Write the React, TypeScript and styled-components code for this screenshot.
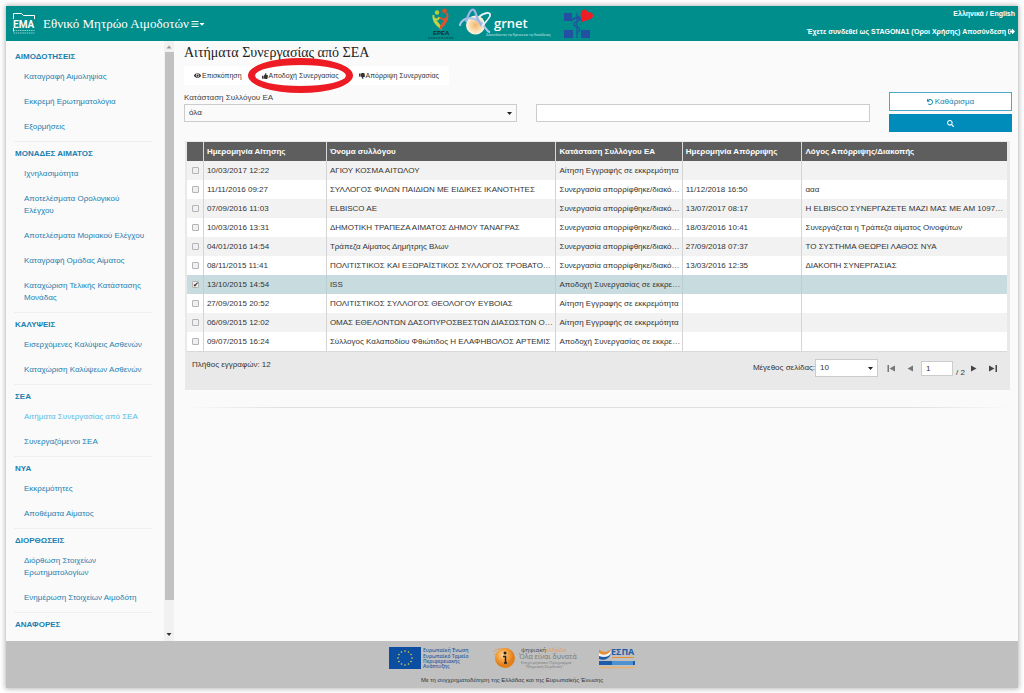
import React, { useState } from "react";
import styled, { createGlobalStyle } from "styled-components";
import {
  FaBars,
  FaCaretDown,
  FaEye,
  FaSearch,
  FaSignOutAlt,
  FaThumbsDown,
  FaThumbsUp,
  FaUndo,
} from "react-icons/fa";

const sans = `"Liberation Sans", Arial, sans-serif`;
const serif = `"Liberation Serif", "Times New Roman", serif`;

const GlobalStyle = createGlobalStyle`
  *, *::before, *::after { box-sizing: border-box; }
  body {
    margin: 0;
    background: #fff;
    color: #333;
    font-family: ${sans};
    font-size: 8px;
    line-height: 12px;
  }
  button, input, select { font: inherit; color: inherit; margin: 0; }
  a { color: inherit; text-decoration: none; }
`;

const Page = styled.div`
  min-height: 100vh;
  padding: 6px 6px 5px;
  display: flex;
`;

const Frame = styled.div`
  flex: 1;
  min-width: 0;
  display: flex;
  flex-direction: column;
  background: #fafafa;
  box-shadow: 0 0 5px 1px rgba(0, 0, 0, 0.28);
`;

const Header = styled.header`
  display: grid;
  grid-template-columns: 1fr auto 1fr;
  height: 35px;
  padding-right: 3px;
  background: #008e8c;
  color: #fff;
`;

const Brand = styled.div`
  display: flex;
  align-items: center;
  gap: 6px;
  padding-left: 6px;
`;

const BrandName = styled.span`
  font-family: ${serif};
  font-size: 13px;
  line-height: 16px;
  white-space: nowrap;
`;

const MenuToggle = styled.button`
  display: flex;
  align-items: center;
  padding: 0;
  border: 0;
  background: none;
  margin-left: -4px;
  svg + svg { width: 6px; }
`;

const Partners = styled.div`
  display: flex;
  align-items: center;
  gap: 4px;
`;

const Account = styled.div`
  display: flex;
  flex-direction: column;
  align-items: flex-end;
  gap: 6px;
  padding-top: 2px;
  font-size: 7px;
  font-weight: bold;
  white-space: nowrap;
  svg { vertical-align: -1px; }
`;

const Body = styled.div`
  flex: 1;
  display: flex;
  min-height: 0;
`;

const Sidebar = styled.div`
  display: flex;
  width: 168px;
  flex: none;
`;

const Nav = styled.nav`
  flex: 1;
  padding: 7px 12px 0 8px;
  color: #1b7fb0;
`;

const NavGroup = styled.section`
  & + & {
    margin-top: 1px;
    border-top: 1px solid #efefef;
    padding-top: 3px;
  }
`;

const NavHeading = styled.h2`
  margin: 0;
  padding: 3px 1px 2px;
  font-size: 8px;
  line-height: 12px;
`;

const NavList = styled.ul`
  margin: 0;
  padding: 0;
  list-style: none;
`;

const NavLink = styled.a<{ $active?: boolean }>`
  display: block;
  padding: 6px 4px 7px 10px;
  color: ${(p) => (p.$active ? "#5bbbe6" : "inherit")};
`;

const ScrollTrack = styled.div`
  display: flex;
  flex-direction: column;
  align-items: center;
  width: 10px;
  background: #f1f1f1;
`;

const ScrollArrow = styled.svg`
  width: 10px;
  height: 11px;
  flex: none;
`;

const ScrollThumb = styled.div`
  flex: 55;
  width: 9px;
  background: #c1c1c1;
`;

const ScrollRest = styled.div`
  flex: 3;
`;

const Main = styled.main`
  flex: 1;
  min-width: 0;
  padding: 4px 6px 0 10px;
`;

const Title = styled.h1`
  margin: 0 0 5px;
  font-family: ${serif};
  font-size: 14px;
  line-height: 16px;
  font-weight: normal;
  color: #222;
`;

const Toolbar = styled.div`
  display: inline-flex;
  height: 19px;
  padding: 0 10px;
  gap: 20px;
  background: #fff;
  vertical-align: top;
`;

const ToolButton = styled.button`
  position: relative;
  display: flex;
  align-items: center;
  gap: 1px;
  padding: 0;
  border: 0;
  background: none;
  font-size: 7px;
  white-space: nowrap;
`;

const HighlightRing = styled.span`
  position: absolute;
  inset: -8px -14px;
  border: 7px solid #ed1c24;
  border-radius: 50%;
  pointer-events: none;
`;

const Filters = styled.form`
  display: grid;
  grid-template-columns: 333fr 333fr 123fr;
  column-gap: 19px;
  align-items: end;
  margin-top: 7px;
`;

const Field = styled.div`
  display: flex;
  flex-direction: column;
  padding-bottom: 10px;
`;

const FieldLabel = styled.label`
  line-height: 12px;
  color: #444;
`;

const SelectWrap = styled.div<{ $width?: string; $bg: string }>`
  display: grid;
  align-items: center;
  width: ${(p) => p.$width ?? "100%"};
  height: 18px;
  border: 1px solid #ccc;
  background: ${(p) => p.$bg};
  & > * { grid-area: 1 / 1; }
  & > svg { justify-self: end; margin-right: 4px; pointer-events: none; }
`;

const Select = styled.select`
  appearance: none;
  width: 100%;
  height: 16px;
  padding: 0 4px;
  border: 0;
  background: transparent;
`;

const TextInput = styled.input`
  width: 100%;
  height: 18px;
  padding: 0 4px;
  border: 1px solid #ccc;
  background: #fff;
`;

const Actions = styled.div`
  display: flex;
  flex-direction: column;
  gap: 3px;
`;

const ActionButton = styled.button<{ $solid?: boolean }>`
  display: flex;
  align-items: center;
  justify-content: center;
  gap: 2px;
  height: ${(p) => (p.$solid ? 18 : 19)}px;
  padding: 0;
  border: 1px solid ${(p) => (p.$solid ? "#008cba" : "#4ba8c8")};
  background: ${(p) => (p.$solid ? "#008cba" : "#fff")};
  color: ${(p) => (p.$solid ? "#fff" : "#1583b0")};
`;

const GridPanel = styled.section`
  margin: 9px 2px 0 1px;
  padding: 1px 3px 0 2px;
  background: #e9e9e9;
`;

const Table = styled.table`
  width: 100%;
  table-layout: fixed;
  border-collapse: collapse;
`;

const HeadCell = styled.th`
  height: 19px;
  padding: 0 0 0 3px;
  background: #5e5e5e;
  color: #fff;
  text-align: left;
  white-space: nowrap;
  & + & { border-left: 1px solid #d8d8d8; }
`;

const Row = styled.tr<{ $selected: boolean }>`
  background: ${(p) => (p.$selected ? "#c8dce0" : "#fff")};
  &:nth-child(odd) { background: ${(p) => (p.$selected ? "#c8dce0" : "#f2f2f2")}; }
  td + td { border-left: 1px solid ${(p) => (p.$selected ? "#bccfd3" : "#d4d4d4")}; }
`;

const Cell = styled.td`
  height: 19px;
  padding: 0 0 0 3px;
  overflow: hidden;
  text-overflow: ellipsis;
  white-space: nowrap;
`;

const CheckCell = styled.td`
  padding: 1px 0 0 1px;
  text-align: center;
  line-height: 8px;
`;

const CheckBox = styled.input`
  appearance: none;
  display: inline-grid;
  place-items: center;
  width: 7px;
  height: 7px;
  border: 1px solid #b4b4b4;
  border-radius: 1px;
  background: #f0f0f0;
  vertical-align: top;
  &:checked::before {
    content: "✔";
    font: 7px/7px "DejaVu Sans", sans-serif;
    color: #222;
  }
`;

const Pager = styled.div`
  display: flex;
  justify-content: space-between;
  height: 39px;
  padding: 7px 6px 0 5px;
  border-top: 1px solid #d9d9d9;
`;

const PagerControls = styled.div`
  display: flex;
  height: 18px;
  align-items: center;
`;

const PagerSelect = styled(SelectWrap)`
  margin-right: 4px;
`;

const PageNumber = styled.input`
  width: 32px;
  height: 15px;
  margin-left: 3px;
  padding: 0 4px;
  border: 1px solid #ccc;
  background: #fff;
`;

const PageTotal = styled.span`
  align-self: flex-end;
  line-height: 9px;
  margin-left: 3px;
`;

const PagerButton = styled.button`
  display: grid;
  place-items: center;
  width: 18px;
  height: 14px;
  padding: 0;
  border: 0;
  background: none;
  color: #444;
  &:disabled { color: #777; }
`;

const Divider = styled.hr`
  height: 1px;
  margin: 17px 0 0;
  border: 0;
  background: linear-gradient(to right, transparent, #e0e0e0 12%, #e0e0e0 88%, transparent);
`;

const Footer = styled.footer`
  display: flex;
  flex-direction: column;
  align-items: center;
  height: 47px;
  padding-top: 4px;
  background: #c0c0c0;
  color: #333;
`;

const Logos = styled.div`
  display: flex;
  align-items: center;
  gap: 20px;
  height: 26px;
`;

const Caption = styled.p`
  margin: 3px 0 0;
  font-size: 6px;
  line-height: 12px;
`;

const navGroups = [
  { title: "ΑΙΜΟΔΟΤΗΣΕΙΣ", items: ["Καταγραφή Αιμοληψίας", "Εκκρεμή Ερωτηματολόγια", "Εξορμήσεις"] },
  {
    title: "ΜΟΝΑΔΕΣ ΑΙΜΑΤΟΣ",
    items: [
      "Ιχνηλασιμότητα",
      "Αποτελέσματα Ορολογικού Ελέγχου",
      "Αποτελέσματα Μοριακού Ελέγχου",
      "Καταγραφή Ομάδας Αίματος",
      "Καταχώριση Τελικής Κατάστασης Μονάδας",
    ],
  },
  { title: "ΚΑΛΥΨΕΙΣ", items: ["Εισερχόμενες Καλύψεις Ασθενών", "Καταχώριση Καλύψεων Ασθενών"] },
  { title: "ΣΕΑ", items: ["Αιτήματα Συνεργασίας από ΣΕΑ", "Συνεργαζόμενοι ΣΕΑ"] },
  { title: "ΝΥΑ", items: ["Εκκρεμότητες", "Αποθέματα Αίματος"] },
  { title: "ΔΙΟΡΘΩΣΕΙΣ", items: ["Διόρθωση Στοιχείων Ερωτηματολογίων", "Ενημέρωση Στοιχείων Αιμοδότη"] },
  { title: "ΑΝΑΦΟΡΕΣ", items: [] },
];

const activeItem = "Αιτήματα Συνεργασίας από ΣΕΑ";

const columns = [
  { title: "Ημερομηνία Αίτησης", width: "15%" },
  { title: "Όνομα συλλόγου", width: "28%" },
  { title: "Κατάσταση Συλλόγου ΕΑ", width: "15.4%" },
  { title: "Ημερομηνία Απόρριψης", width: "14.6%" },
  { title: "Λόγος Απόρριψης/Διακοπής", width: "25%" },
];

const pending = "Αίτηση Εγγραφής σε εκκρεμότητα";
const rejected = "Συνεργασία απορρίφθηκε/διακόπηκε";
const accepting = "Αποδοχή Συνεργασίας σε εκκρεμότητα";

const rows: string[][] = [
  ["10/03/2017 12:22", "ΑΓΙΟΥ ΚΟΣΜΑ ΑΙΤΩΛΟΥ", pending, "", ""],
  ["11/11/2016 09:27", "ΣΥΛΛΟΓΟΣ ΦΙΛΩΝ ΠΑΙΔΙΩΝ ΜΕ ΕΙΔΙΚΕΣ ΙΚΑΝΟΤΗΤΕΣ", rejected, "11/12/2018 16:50", "ααα"],
  ["07/09/2016 11:03", "ELBISCO AE", rejected, "13/07/2017 08:17", "Η ELBISCO ΣΥΝΕΡΓΑΖΕΤΕ ΜΑΖΙ ΜΑΣ ΜΕ ΑΜ 10975...."],
  ["10/03/2016 13:31", "ΔΗΜΟΤΙΚΗ ΤΡΑΠΕΖΑ ΑΙΜΑΤΟΣ ΔΗΜΟΥ ΤΑΝΑΓΡΑΣ", rejected, "18/03/2016 10:41", "Συνεργάζεται η Τράπεζα αίματος Οινοφύτων"],
  ["04/01/2016 14:54", "Τράπεζα Αίματος Δημήτρης Βλων", rejected, "27/09/2018 07:37", "ΤΟ ΣΥΣΤΗΜΑ ΘΕΩΡΕΙ ΛΑΘΟΣ ΝΥΑ"],
  ["08/11/2015 11:41", "ΠΟΛΙΤΙΣΤΙΚΟΣ ΚΑΙ ΕΞΩΡΑΪΣΤΙΚΟΣ ΣΥΛΛΟΓΟΣ ΤΡΟΒΑΤΟΥ ΤΡΙΚΑΛΩΝ", rejected, "13/03/2016 12:35", "ΔΙΑΚΟΠΗ ΣΥΝΕΡΓΑΣΙΑΣ"],
  ["13/10/2015 14:54", "ISS", accepting, "", ""],
  ["27/09/2015 20:52", "ΠΟΛΙΤΙΣΤΙΚΟΣ ΣΥΛΛΟΓΟΣ ΘΕΟΛΟΓΟΥ ΕΥΒΟΙΑΣ", pending, "", ""],
  ["06/09/2015 12:02", "ΟΜΑΣ ΕΘΕΛΟΝΤΩΝ ΔΑΣΟΠΥΡΟΣΒΕΣΤΩΝ ΔΙΑΣΩΣΤΩΝ ΟΚΤΩΝΙΑΣ", pending, "", ""],
  ["09/07/2015 16:24", "Σύλλογος Καλαποδίου Φθιώτιδος Η ΕΛΑΦΗΒΟΛΟΣ ΑΡΤΕΜΙΣ", accepting, "", ""],
];

const EmaLogo = () => (
  <svg width="25" height="25" viewBox="0 0 25 25" aria-hidden="true">
    <path d="M1.5 8V2.5h8l2 2h11V8M1.5 17v3.5" fill="none" stroke="#fff" strokeWidth="1" />
    <path d="M22.5 4.500V8" stroke="#fff" strokeWidth="1" />
    <text x="1" y="17" fontFamily="Roboto, sans-serif" fontWeight="bold" fontSize="10" fill="#fff">ΕΜΑ</text>
    <path d="M1.500 19.500h21M1.500 22h21" stroke="#8fd0cf" strokeWidth="1" strokeDasharray="1.500 0.700" />
  </svg>
);

const EpsaLogo = () => (
  <svg width="28" height="33" viewBox="0 0 28 33" aria-hidden="true">
    <circle cx="10" cy="5.500" r="2.200" fill="#b5cc3c" />
    <circle cx="17.500" cy="4" r="2.400" fill="#d8502c" />
    <path d="M6.500 8c-1 5 2 9 7 13 0-4-5-5-5.500-9 2 1 3.500 1 4-2" fill="none" stroke="#c3d245" strokeWidth="2" />
    <path d="M20 6c2 5-1 10-6.500 15 0-3 4.500-5 4.500-9-2 1-4 0-4.500-2" fill="none" stroke="#dd5330" strokeWidth="2" />
    <text x="6" y="28" fontFamily="Liberation Sans" fontWeight="bold" fontSize="6" fill="#12302f">ΕΡΕΑ</text>
    <path d="M1 31h26" stroke="#0b4a49" strokeWidth="1.200" strokeDasharray="2 0.600" />
  </svg>
);

const GrnetLogo = () => (
  <svg width="100" height="33" viewBox="0 0 100 33" aria-hidden="true">
    <defs>
      <radialGradient id="globe">
        <stop offset="0" stopColor="#f3b46c" />
        <stop offset="0.600" stopColor="#f8dcae" />
        <stop offset="1" stopColor="#fdf7e6" />
      </radialGradient>
    </defs>
    <circle cx="16.500" cy="18" r="9.500" fill="url(#globe)" />
    <path d="M.500 19C3 11 11 9 19 13.500s7 10 12 12" fill="none" stroke="#a9c5ea" strokeWidth="2.200" />
    <path d="M7 15C10 4 13 1.500 15 3s3 11 8 16" fill="none" stroke="#9db4e4" strokeWidth="2.200" />
    <path d="M20 10c4-4 10-5 11-3s-3 7-8 12" fill="none" stroke="#e6f3fa" strokeWidth="1.800" />
    <text x="35" y="21" fontFamily="Open Sans, sans-serif" fontWeight="600" fontSize="13" fill="#fff">grnet</text>
    <text x="27" y="29" fontFamily="Roboto, sans-serif" fontSize="3" fill="#c8e6e5">Διασυνδέοντας την Έρευνα και την Εκπαίδευση</text>
  </svg>
);

const HealthLogo = () => (
  <svg width="32" height="31" viewBox="0 0 32 31" aria-hidden="true">
    <path d="M1 5h8v8H1zM1 22h9v8H1zM18 22h9v8h-9z" fill="#2450a4" />
    <path d="M14 5v25" stroke="#2450a4" strokeWidth="1.200" />
    <path d="M14 8c4 1 4 4 0 5.500s-4 4 0 5.500 3 4 0 6M9 13c1-4 8-4 10 0" fill="none" stroke="#2450a4" strokeWidth="1.300" />
    <path d="M18.500 3c2-2.500 5.500-2 6 1.500 3-1 6 .500 5.500 3.500-.500 3.500-6 4-11 6C18.500 10 16.500 6 18.500 3z" fill="#ee1c25" />
  </svg>
);

const EuLogo = () => (
  <svg width="84" height="24" viewBox="0 0 84 24" aria-hidden="true">
    <rect x="0" y="1" width="32" height="22" fill="#0b4ea2" />
    {Array.from({ length: 12 }, (_, i) => {
      const a = (i * Math.PI) / 6;
      return <circle key={i} cx={16 + 7 * Math.cos(a)} cy={12 + 7 * Math.sin(a)} r="0.800" fill="#e8d93c" />;
    })}
    <g fontFamily="Open Sans, sans-serif" fontSize="5" fill="#2b5ba0" fontWeight="600">
      <text x="34" y="6">Ευρωπαϊκή Ένωση</text>
      <text x="34" y="12">Ευρωπαϊκό Ταμείο</text>
      <text x="34" y="17">Περιφερειακής</text>
      <text x="34" y="22">Ανάπτυξης</text>
    </g>
  </svg>
);

const DigitalLogo = () => (
  <svg width="86" height="24" viewBox="0 0 86 24" aria-hidden="true">
    <defs>
      <radialGradient id="ball" cx="0.400" cy="0.350">
        <stop offset="0" stopColor="#ffd9a0" />
        <stop offset="0.550" stopColor="#f7a23d" />
        <stop offset="1" stopColor="#e07f1c" />
      </radialGradient>
    </defs>
    <path d="M0 6c6-5 13-4 18 0M1 9c4-3 8-4 12-3" stroke="#d9a262" fill="none" />
    <circle cx="12" cy="12" r="10" fill="url(#ball)" />
    <circle cx="12" cy="7" r="1.500" fill="#222" />
    <path d="M10 10.500h2.500V16l1 1M11 17h3" stroke="#222" strokeWidth="1.500" fill="none" />
    <g fontFamily="Open Sans, sans-serif">
      <text x="28" y="6" fontSize="6" fill="#444">ψηφιακή<tspan fill="#e79a4a">ελλάδα</tspan></text>
      <text x="26" y="13" fontSize="7" fill="#777">Όλα είναι δυνατά</text>
      <text x="28" y="18" fontSize="4" fill="#777">Επιχειρησιακό Πρόγραμμα</text>
      <text x="32" y="22" fontSize="4" fill="#777">"Ψηφιακή Σύγκλιση"</text>
    </g>
  </svg>
);

const EspaLogo = () => (
  <svg width="36" height="24" viewBox="0 0 36 24" aria-hidden="true">
    <path d="M0 3c3 4 8 4 12 0-2 6-8 7-12 5z" fill="#e88f33" />
    <path d="M0 7c5 3 8 2 12-2-1 7-8 9-12 6z" fill="#f4f4f4" />
    <path d="M0 10c5 2 9 1 12-2-2 5-7 7-12 5z" fill="#1c5ca8" />
    <text x="12" y="9" fontFamily="Open Sans, sans-serif" fontWeight="bold" fontSize="9" fill="#1c5ca8">ΕΣΠΑ</text>
    <path d="M13 11.500h22" stroke="#e88f33" />
    <rect x="0" y="15" width="36" height="4" fill="#1c5ca8" />
    <rect x="13" y="15" width="21" height="4" fill="#4d91cf" />
    <path d="M0 21.500h36" stroke="#e8b06e" strokeWidth="1.500" />
  </svg>
);

const Chevron = () => (
  <svg width="5" height="3" viewBox="0 0 5 3" aria-hidden="true">
    <path d="M0 0h5L2.500 3z" fill="#222" />
  </svg>
);

const PageIcon = ({ back, edge }: { back?: boolean; edge?: boolean }) => (
  <svg width="9" height="7" viewBox="0 0 9 7" fill="currentColor" aria-hidden="true">
    {back ? <path d="M8 .500v6L2.500 3.500z" /> : <path d="M1 .500v6l5.500-3z" />}
    {edge && <rect x={back ? 0.5 : 7.5} y="0" width="1.500" height="7" />}
  </svg>
);

export default function App() {
  const [selected, setSelected] = useState<number[]>([6]);
  const toggle = (i: number) =>
    setSelected((s) => (s.includes(i) ? s.filter((n) => n !== i) : [...s, i]));

  return (
    <>
      <GlobalStyle />
      <Page>
        <Frame>
          <Header>
            <Brand>
              <EmaLogo />
              <BrandName>Εθνικό Μητρώο Αιμοδοτών</BrandName>
              <MenuToggle type="button" aria-label="Μενού">
                <FaBars size={8} />
                <FaCaretDown size={8} />
              </MenuToggle>
            </Brand>
            <Partners>
              <EpsaLogo />
              <GrnetLogo />
              <HealthLogo />
            </Partners>
            <Account>
              <span>
                <a href="#el">Ελληνικά</a> / <a href="#en">English</a>
              </span>
              <span>
                Έχετε συνδεθεί ως STAGONA1 (<a href="#terms">Όροι Χρήσης</a>){" "}
                <a href="#logout">
                  Αποσύνδεση <FaSignOutAlt size={7} />
                </a>
              </span>
            </Account>
          </Header>

          <Body>
            <Sidebar>
              <Nav>
                {navGroups.map((g) => (
                  <NavGroup key={g.title}>
                    <NavHeading>{g.title}</NavHeading>
                    <NavList>
                      {g.items.map((item) => (
                        <li key={item}>
                          <NavLink href="#nav" $active={item === activeItem}>
                            {item}
                          </NavLink>
                        </li>
                      ))}
                    </NavList>
                  </NavGroup>
                ))}
              </Nav>
              <ScrollTrack aria-hidden="true">
                <ScrollArrow viewBox="0 0 10 11">
                  <path d="M2.500 7.500h5L5 4.500z" fill="#999" />
                </ScrollArrow>
                <ScrollThumb />
                <ScrollRest />
                <ScrollArrow viewBox="0 0 10 11">
                  <path d="M2.500 3h5L5 6z" fill="#333" />
                </ScrollArrow>
              </ScrollTrack>
            </Sidebar>

            <Main>
              <Title>Αιτήματα Συνεργασίας από ΣΕΑ</Title>
              <Toolbar>
                <ToolButton type="button">
                  <FaEye size={7} />
                  Επισκόπηση
                </ToolButton>
                <ToolButton type="button">
                  <FaThumbsUp size={6} />
                  Αποδοχή Συνεργασίας
                  <HighlightRing />
                </ToolButton>
                <ToolButton type="button">
                  <FaThumbsDown size={6} />
                  Απόρριψη Συνεργασίας
                </ToolButton>
              </Toolbar>

              <Filters onSubmit={(e) => e.preventDefault()}>
                <Field>
                  <FieldLabel htmlFor="status">Κατάσταση Συλλόγου ΕΑ</FieldLabel>
                  <SelectWrap $bg="#fafafa">
                    <Select id="status">
                      <option>όλα</option>
                    </Select>
                    <Chevron />
                  </SelectWrap>
                </Field>
                <Field>
                  <TextInput type="text" aria-label="Αναζήτηση" />
                </Field>
                <Actions>
                  <ActionButton type="reset">
                    <FaUndo size={6} />
                    Καθάρισμα
                  </ActionButton>
                  <ActionButton type="submit" $solid aria-label="Αναζήτηση">
                    <FaSearch size={7} />
                  </ActionButton>
                </Actions>
              </Filters>

              <GridPanel>
                <Table>
                  <colgroup>
                    <col style={{ width: "2%" }} />
                    {columns.map((c) => (
                      <col key={c.title} style={{ width: c.width }} />
                    ))}
                  </colgroup>
                  <thead>
                    <tr>
                      <HeadCell aria-label="Επιλογή" />
                      {columns.map((c) => (
                        <HeadCell key={c.title}>{c.title}</HeadCell>
                      ))}
                    </tr>
                  </thead>
                  <tbody>
                    {rows.map((r, i) => (
                      <Row key={r[0]} $selected={selected.includes(i)}>
                        <CheckCell>
                          <CheckBox
                            type="checkbox"
                            aria-label={r[1]}
                            checked={selected.includes(i)}
                            onChange={() => toggle(i)}
                          />
                        </CheckCell>
                        {r.map((value, c) => (
                          <Cell key={c}>{value}</Cell>
                        ))}
                      </Row>
                    ))}
                  </tbody>
                </Table>
                <Pager>
                  <span>Πλήθος εγγραφών: 12</span>
                  <PagerControls>
                    <label htmlFor="size">Μέγεθος σελίδας:</label>
                    <PagerSelect $width="63px" $bg="#fff">
                      <Select id="size">
                        <option>10</option>
                      </Select>
                      <Chevron />
                    </PagerSelect>
                    <PagerButton type="button" disabled aria-label="Πρώτη">
                      <PageIcon back edge />
                    </PagerButton>
                    <PagerButton type="button" disabled aria-label="Προηγούμενη">
                      <PageIcon back />
                    </PagerButton>
                    <PageNumber type="text" defaultValue="1" aria-label="Σελίδα" />
                    <PageTotal>/ 2</PageTotal>
                    <PagerButton type="button" aria-label="Επόμενη">
                      <PageIcon />
                    </PagerButton>
                    <PagerButton type="button" aria-label="Τελευταία">
                      <PageIcon edge />
                    </PagerButton>
                  </PagerControls>
                </Pager>
              </GridPanel>
              <Divider />
            </Main>
          </Body>

          <Footer>
            <Logos>
              <EuLogo />
              <DigitalLogo />
              <EspaLogo />
            </Logos>
            <Caption>Με τη συγχρηματοδότηση της Ελλάδας και της Ευρωπαϊκής Ένωσης</Caption>
          </Footer>
        </Frame>
      </Page>
    </>
  );
}
